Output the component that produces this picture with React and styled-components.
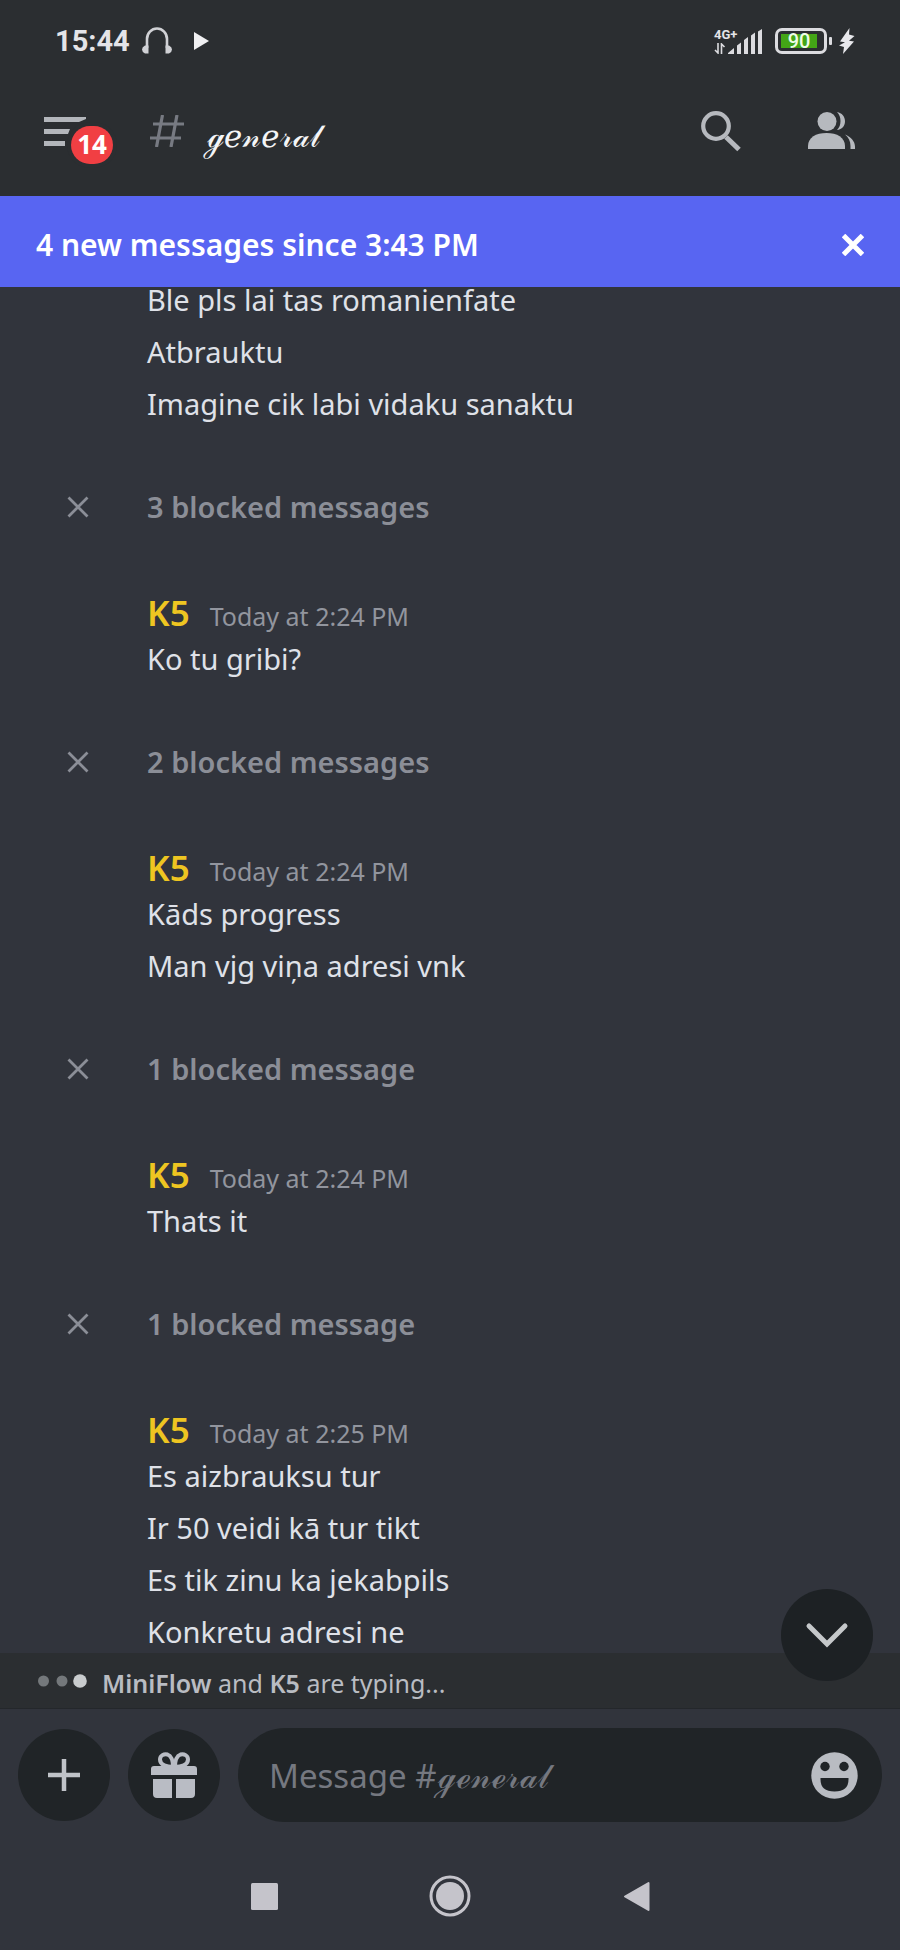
import styled, { createGlobalStyle } from "styled-components"


const GlobalStyle = createGlobalStyle`
  * {
    box-sizing: border-box;
  }
  body {
    margin: 0;
    background: #31343c;
    font-family: "Noto Sans", "Open Sans", sans-serif;
  }
  button {
    border: none;
    padding: 0;
    margin: 0;
    background: none;
    color: inherit;
    font: inherit;
    cursor: pointer;
  }
  svg {
    display: block;
  }
`

const StyledApp = styled.div`
  display: flex;
  flex-direction: column;
  height: 100vh;
  background: #31343c;
  color: #dfe1e8;
`

const StyledTop = styled.header`
  flex: none;
  background: #2b2e31;
`

const StyledStatusBar = styled.div`
  display: flex;
  align-items: center;
  justify-content: space-between;
  height: 66px;
  padding: 16px 45px 0 55px;
  color: #e4e4e8;
  font-family: Roboto, sans-serif;
`

const StyledStatusGroup = styled.div`
  display: flex;
  align-items: center;
  gap: ${({ $gap }) => $gap}px;
`

const StyledClock = styled.time`
  font-size: 29px;
  font-weight: 700;
  line-height: 32px;
`

const StyledNetwork = styled.div`
  display: flex;
  align-items: flex-end;
  height: 26px;
`

const StyledNetworkType = styled.div`
  display: flex;
  flex-direction: column;
  justify-content: space-between;
  width: 14px;
  height: 26px;
  font-size: 13px;
  font-weight: 700;
  line-height: 13px;
  white-space: nowrap;
`

const StyledBattery = styled.div`
  display: flex;
  align-items: center;
  gap: 2px;
`

const StyledBatteryCase = styled.div`
  display: flex;
  align-items: center;
  width: 52px;
  height: 26px;
  padding: 0 3px;
  border: 3px solid #dcdce0;
  border-radius: 7px;
`

const StyledBatteryLevel = styled.div`
  display: flex;
  align-items: center;
  justify-content: center;
  height: 14px;
  background: #43a516;
  color: #eefbe8;
  font-size: 20px;
  font-weight: 500;
`

const StyledBatteryTip = styled.span`
  width: 3px;
  height: 8px;
  border-radius: 1px;
  background: #dcdce0;
`

const StyledToolbar = styled.div`
  display: flex;
  align-items: center;
  height: 130px;
  padding: 0 44px;
`

const StyledMenuButton = styled.button`
  position: relative;
  width: 69px;
  height: 48px;
  margin-right: 36px;
`

const StyledBadge = styled.span`
  position: absolute;
  right: 0;
  bottom: -9px;
  min-width: 42px;
  height: 38px;
  border-radius: 19px;
  background: #f13f43;
  box-shadow: 0 0 0 4px #2b2e31;
  color: #ffffff;
  font-size: 26px;
  font-weight: 700;
  line-height: 37px;
`

const StyledTitle = styled.h1`
  flex: 1;
  margin: 0 0 0 21px;
  padding-top: 10px;
  color: #f4f5f7;
  font-family: "DejaVu Sans", sans-serif;
  font-size: 31px;
  font-weight: 400;
  line-height: 40px;
`

const StyledActions = styled.div`
  display: flex;
  align-items: center;
  gap: 66px;
`

const StyledBanner = styled.div`
  display: flex;
  flex: none;
  align-items: center;
  justify-content: space-between;
  height: 91px;
  padding: 6px 36px 0;
  background: #5865f2;
  color: #ffffff;
  font-size: 30px;
  font-weight: 600;
`

const StyledMessages = styled.main`
  display: flex;
  flex: 1;
  flex-direction: column;
  justify-content: flex-end;
  gap: 61px;
  min-height: 0;
  overflow: hidden;
`

const StyledGroup = styled.article`
  flex: none;
  padding: 0 24px 0 147px;
`

const StyledGroupHead = styled.div`
  display: flex;
  align-items: baseline;
  gap: 20px;
  margin-bottom: 1px;
`

const StyledAuthor = styled.span`
  color: #eec521;
  font-size: 35px;
  font-weight: 600;
  line-height: 48px;
`

const StyledTime = styled.time`
  color: #92959e;
  font-size: 25px;
  line-height: 36px;
`

const StyledLines = styled.div`
  display: flex;
  flex-direction: column;
  gap: 10px;
`

const StyledLine = styled.p`
  margin: 0;
  font-size: 29px;
  line-height: 42px;
`

const StyledBlocked = styled.button`
  display: flex;
  flex: none;
  align-items: center;
  gap: 58px;
  padding: 0 24px 0 67px;
  color: #8b8e97;
  font-size: 29px;
  font-weight: 600;
  line-height: 42px;
  text-align: left;
`

const StyledFooter = styled.footer`
  position: relative;
  flex: none;
`

const StyledJumpButton = styled.button`
  position: absolute;
  top: -64px;
  right: 27px;
  display: grid;
  place-items: center;
  width: 92px;
  height: 92px;
  border-radius: 50%;
  background: #1d2124;
`

const StyledTyping = styled.div`
  display: flex;
  align-items: center;
  gap: 15px;
  height: 56px;
  padding-left: 38px;
  border-bottom: 1px solid #24272b;
  background: #2b2e31;
  color: #b9bcc2;
  font-size: 25px;
`

const StyledTypingText = styled.p`
  margin: 4px 0 0;

  strong {
    font-weight: 600;
  }
`

const StyledComposer = styled.form`
  display: flex;
  align-items: center;
  gap: 18px;
  padding: 19px 18px 20px;
`

const StyledRoundButton = styled.button`
  display: grid;
  flex: none;
  place-items: center;
  width: 92px;
  height: 92px;
  border-radius: 50%;
  background: #202427;
`

const StyledField = styled.div`
  display: flex;
  flex: 1;
  align-items: center;
  height: 94px;
  padding: 0 24px 0 29px;
  border-radius: 47px;
  background: #202427;
`

const StyledInput = styled.input`
  flex: 1;
  min-width: 0;
  border: none;
  outline: none;
  background: none;
  color: #dfe1e8;
  font-family: "Noto Sans", "DejaVu Sans", sans-serif;
  font-size: 33px;

  &::placeholder {
    color: #757880;
    opacity: 1;
  }
`

const StyledNav = styled.nav`
  display: flex;
  align-items: center;
  justify-content: center;
  gap: 138px;
  height: 108px;
`

const StyledNavButton = styled.button`
  display: grid;
  place-items: center;
  width: 48px;
  height: 48px;
`


const HeadphonesIcon = () => (
  <svg width="30" height="28" viewBox="0 0 30 28" fill="none">
    <path d="M5 21V12a10 10.500 0 0 1 20 0v9" stroke="#d0d1d5" strokeWidth="2.600" />
    <path d="M6.500 18.500v8L3 26.500Q0 25 0 22.500T3 18.500zM23.500 18.500v8L27 26.500Q30 25 30 22.500T27 18.500z" fill="#d0d1d5" />
  </svg>
)

const PlayIcon = () => (
  <svg width="15" height="18" viewBox="0 0 15 18">
    <path d="M0 0l15 9-15 9z" fill="#f0f0f2" />
  </svg>
)

const DataArrowsIcon = () => (
  <svg width="12" height="11" viewBox="0 0 12 11" fill="none" stroke="#dcdce0" strokeWidth="1.600">
    <path d="M4 0v10L1 7M7.500 11V1l3 3" />
  </svg>
)

const SignalIcon = () => (
  <svg width="34" height="25" viewBox="0 0 34 25" fill="#dcdce0">
    <path d="M0 25v-1l6-5v6zM9 16.500l4-3V25H9zM16 11l4-3v17h-4zM23 6.500l4-3V25h-4zM30 2.500L34 0v25h-4z" />
  </svg>
)

const BoltIcon = () => (
  <svg width="16" height="26" viewBox="0 0 16 26" fill="#e8e8ec">
    <path d="M10.500 0L1 13.500l5 .7L0 17.500l5 1.500L4 26l11-12.500-5-.7L15.500 8l-5.500-1.500z" />
  </svg>
)

const MenuIcon = () => (
  <svg width="44" height="48" viewBox="0 0 44 48" fill="#b3b6bb">
    <path d="M0 10h42v2l-7 3H0zM0 22h26l-2 5H0zM0 34h21v5H0z" />
  </svg>
)

const HashIcon = () => (
  <svg width="36" height="32" viewBox="0 0 36 32" fill="none" stroke="#777a82" strokeWidth="3.200">
    <path d="M13.500 0L7.500 32M28 0l-6 32M4 9h31M1 23h31" />
  </svg>
)

const SearchIcon = () => (
  <svg width="42" height="42" viewBox="0 0 42 42" fill="none" stroke="#b6b9be">
    <circle cx="16" cy="16" r="12.800" strokeWidth="4.200" />
    <path d="M26 27l13 12.500" strokeWidth="5" />
  </svg>
)

const PeopleIcon = () => (
  <svg width="48" height="40" viewBox="0 0 48 40" fill="#b6b9be">
    <circle cx="19" cy="10.500" r="9.500" />
    <path d="M0 38v-3C0 26.500 8 22 18.500 22S37 26.500 37 35v3z" />
    <path d="M29 1c5 .8 8 4.600 8 9.200s-3 8.200-8 8.800c2.500-2.500 3.500-5.500 3.500-9S31.500 3.500 29 1zM37 23.500c6 2.500 10 7 10 12V38h-4.500v-3c0-5-2-8.500-5.500-11.500z" />
  </svg>
)

const CloseIcon = ({ size, width }) => (
  <svg width={size} height={size} viewBox="0 0 22 22" fill="none" stroke="currentColor" strokeWidth={width}>
    <path d="M1.500 1.500l19 19M20.500 1.500l-19 19" />
  </svg>
)

const ChevronIcon = () => (
  <svg width="44" height="26" viewBox="0 0 44 26" fill="none" stroke="#c5c8ca" strokeWidth="5" strokeLinecap="round">
    <path d="M4 4l18 18L40 4" />
  </svg>
)

const DotsIcon = () => (
  <svg width="49" height="14" viewBox="0 0 49 14" fill="#74787b">
    <circle cx="5.500" cy="7" r="5.500" />
    <circle cx="24" cy="7" r="5.500" />
    <circle cx="42" cy="7" r="6.800" fill="#c9ccce" />
  </svg>
)

const PlusIcon = () => (
  <svg width="32" height="32" viewBox="0 0 32 32" stroke="#c0c3c8" strokeWidth="4.500">
    <path d="M16 0v32M0 16h32" />
  </svg>
)

const GiftIcon = () => (
  <svg width="48" height="48" viewBox="0 0 48 48" fill="#b9bcc4">
    <path d="M4 15h40q3 0 3 3v6H1v-6q0-3 3-3zM3 28h19v19H7q-4 0-4-4zM26 28h19v15q0 4-4 4H26z" />
    <path d="M23 16C17 16 10 14 10 8.500c0-4 4-6 7.500-5C21.500 5 23 10 23 16zM25 16c6 0 13-2 13-7.500 0-4-4-6-7.500-5C26.500 5 25 10 25 16z" fill="none" stroke="#b9bcc4" strokeWidth="4" />
  </svg>
)

const SmileIcon = () => (
  <svg width="47" height="47" viewBox="0 0 47 47">
    <circle cx="23.500" cy="23.500" r="23.200" fill="#b9bcc2" />
    <circle cx="14" cy="14.500" r="4.700" fill="#202427" />
    <circle cx="33" cy="14.500" r="4.700" fill="#202427" />
    <path d="M9.500 26h28v1.500q0 12-14 12t-14-12z" fill="#202427" />
  </svg>
)

const RecentsIcon = () => (
  <svg width="27" height="27" viewBox="0 0 27 27">
    <rect width="27" height="27" rx="1.500" fill="#c5c4cb" />
  </svg>
)

const HomeIcon = () => (
  <svg width="42" height="42" viewBox="0 0 42 42">
    <circle cx="21" cy="21" r="19" fill="none" stroke="#c5c4cb" strokeWidth="3" />
    <circle cx="21" cy="21" r="14" fill="#c5c4cb" />
  </svg>
)

const BackIcon = () => (
  <svg width="27" height="31" viewBox="0 0 27 31">
    <path d="M2 15.500L25.500 2v27z" fill="#c5c4cb" stroke="#c5c4cb" strokeWidth="2" strokeLinejoin="round" />
  </svg>
)


const channel = "ℊℯ𝓃ℯ𝓇𝒶𝓁"

const feed = [
  { id: 1, lines: ["Ble pls lai tas romanienfate", "Atbrauktu", "Imagine cik labi vidaku sanaktu"] },
  { id: 2, blocked: 3 },
  { id: 3, author: "K5", time: "Today at 2:24 PM", lines: ["Ko tu gribi?"] },
  { id: 4, blocked: 2 },
  { id: 5, author: "K5", time: "Today at 2:24 PM", lines: ["Kāds progress", "Man vjg viņa adresi vnk"] },
  { id: 6, blocked: 1 },
  { id: 7, author: "K5", time: "Today at 2:24 PM", lines: ["Thats it"] },
  { id: 8, blocked: 1 },
  {
    id: 9,
    author: "K5",
    time: "Today at 2:25 PM",
    lines: ["Es aizbrauksu tur", "Ir 50 veidi kā tur tikt", "Es tik zinu ka jekabpils", "Konkretu adresi ne"],
  },
]

const StatusBar = () => (
  <StyledStatusBar>
    <StyledStatusGroup $gap={12}>
      <StyledClock>15:44</StyledClock>
      <StyledStatusGroup $gap={22}>
        <HeadphonesIcon />
        <PlayIcon />
      </StyledStatusGroup>
    </StyledStatusGroup>
    <StyledStatusGroup $gap={13}>
      <StyledNetwork>
        <StyledNetworkType>
          4G+
          <DataArrowsIcon />
        </StyledNetworkType>
        <SignalIcon />
      </StyledNetwork>
      <StyledStatusGroup $gap={7}>
        <StyledBattery>
          <StyledBatteryCase>
            <StyledBatteryLevel style={{ width: "90%" }}>90</StyledBatteryLevel>
          </StyledBatteryCase>
          <StyledBatteryTip />
        </StyledBattery>
        <BoltIcon />
      </StyledStatusGroup>
    </StyledStatusGroup>
  </StyledStatusBar>
)

const MessageGroup = ({ author, time, lines }) => (
  <StyledGroup>
    {author && (
      <StyledGroupHead>
        <StyledAuthor>{author}</StyledAuthor>
        <StyledTime>{time}</StyledTime>
      </StyledGroupHead>
    )}
    <StyledLines>
      {lines.map((line) => (
        <StyledLine key={line}>{line}</StyledLine>
      ))}
    </StyledLines>
  </StyledGroup>
)

const BlockedMessages = ({ count }) => (
  <StyledBlocked type="button">
    <CloseIcon size={22} width={2.8} />
    {`${count} blocked ${count === 1 ? "message" : "messages"}`}
  </StyledBlocked>
)

const App = () => {
  return (
    <StyledApp>
      <GlobalStyle />
      <StyledTop>
        <StatusBar />
        <StyledToolbar>
          <StyledMenuButton type="button" aria-label="Open menu">
            <MenuIcon />
            <StyledBadge>14</StyledBadge>
          </StyledMenuButton>
          <HashIcon />
          <StyledTitle>{channel}</StyledTitle>
          <StyledActions>
            <button type="button" aria-label="Search"><SearchIcon /></button>
            <button type="button" aria-label="Members"><PeopleIcon /></button>
          </StyledActions>
        </StyledToolbar>
      </StyledTop>
      <StyledBanner>
        4 new messages since 3:43 PM
        <button type="button" aria-label="Mark as read"><CloseIcon size={22} width={5} /></button>
      </StyledBanner>
      <StyledMessages>
        {feed.map(({ id, blocked, ...group }) => (
          blocked ? <BlockedMessages key={id} count={blocked} /> : <MessageGroup key={id} {...group} />
        ))}
      </StyledMessages>
      <StyledFooter>
        <StyledJumpButton type="button" aria-label="Jump to present"><ChevronIcon /></StyledJumpButton>
        <StyledTyping>
          <DotsIcon />
          <StyledTypingText><strong>MiniFlow</strong> and <strong>K5</strong> are typing...</StyledTypingText>
        </StyledTyping>
        <StyledComposer onSubmit={(e) => e.preventDefault()}>
          <StyledRoundButton type="button" aria-label="Add attachment"><PlusIcon /></StyledRoundButton>
          <StyledRoundButton type="button" aria-label="Send a gift"><GiftIcon /></StyledRoundButton>
          <StyledField>
            <StyledInput type="text" aria-label="Message" placeholder={`Message #${channel}`} />
            <button type="button" aria-label="Pick an emoji"><SmileIcon /></button>
          </StyledField>
        </StyledComposer>
        <StyledNav>
          <StyledNavButton type="button" aria-label="Recents"><RecentsIcon /></StyledNavButton>
          <StyledNavButton type="button" aria-label="Home"><HomeIcon /></StyledNavButton>
          <StyledNavButton type="button" aria-label="Back"><BackIcon /></StyledNavButton>
        </StyledNav>
      </StyledFooter>
    </StyledApp>
  )
}


export default App
